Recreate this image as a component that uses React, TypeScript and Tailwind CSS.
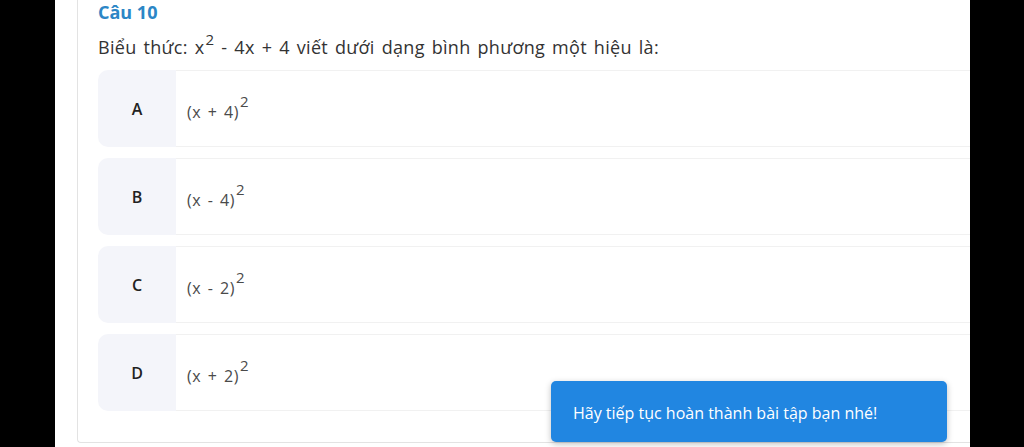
import React from "react"

const OPTIONS = [
    { key: "A", base: "(x + 4)" },
    { key: "B", base: "(x - 4)" },
    { key: "C", base: "(x - 2)" },
    { key: "D", base: "(x + 2)" },
]

const OptionRow = ({ label, base }: { label: string; base: string }) => (
    <div className="flex h-[77px] mb-[11px] last:mb-0">
        <div className="w-[78px] shrink-0 flex items-center justify-center bg-[#f4f5fa] rounded-l-[10px] text-[16px] font-semibold text-[#222]">
            {label}
        </div>
        <div className="flex-1 flex items-center pl-[11px] border-y border-[#f1f1f1] text-[16px] text-[#4a4a4a] tracking-[0.5px] [word-spacing:2px]">
            <span className="pt-[6px]">
                {base}
                <span className="inline-block align-top text-[15px] relative -top-[10px] ml-[1px]">2</span>
            </span>
        </div>
    </div>
)

export default function App() {
    return (
        <div
            className="w-[1024px] h-[447px] flex bg-black overflow-hidden relative"
            style={{ fontFamily: '"Open Sans", "Noto Sans", sans-serif' }}
        >
            <div className="w-[55px] shrink-0 bg-black" />
            <div className="w-[915px] shrink-0 bg-white pl-[22px] pb-[4px] overflow-hidden">
                <div className="h-full border-l border-b border-[#e3e3e3] rounded-bl-[4px] pl-[20px] pb-[31px] flex flex-col">
                    <div className="text-[18px] leading-[24px] font-bold text-[#2b86c6]">
                        Câu 10
                    </div>
                    <div className="mt-[9px] text-[18px] leading-[28px] text-[#333] tracking-[0.3px] [word-spacing:2px] whitespace-nowrap">
                        Biểu thức: x
                        <span className="inline-block align-top text-[15px] relative -top-[8px] ml-[1px]">2</span> - 4x + 4 viết dưới dạng bình phương một hiệu là:
                    </div>
                    <div className="mt-[9px]">
                        {OPTIONS.map((o) => (
                            <OptionRow key={o.key} label={o.key} base={o.base} />
                        ))}
                    </div>
                </div>
            </div>
            <div className="flex-1 bg-black" />

            {/* toast */}
            <div className="absolute left-[551px] top-[381px] w-[396px] h-[61px] rounded-[5px] bg-[#2186e1] shadow-[0_2px_6px_rgba(0,0,0,0.25)] flex items-center pl-[22px] pt-[2px] text-[16px] text-white">
                Hãy tiếp tục hoàn thành bài tập bạn nhé!
            </div>
        </div>
    )
}
